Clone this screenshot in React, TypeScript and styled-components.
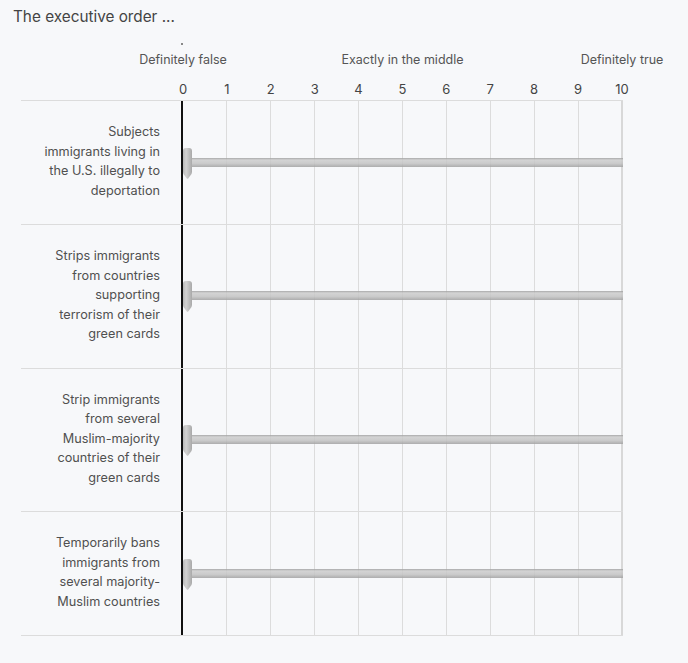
import React from "react";
import styled, { createGlobalStyle } from "styled-components";

const GlobalStyle = createGlobalStyle`
  html, body {
    margin: 0;
    padding: 0;
    background: #f7f8fa;
  }
  body {
    font-family: Inter, "Liberation Sans", Arial, sans-serif;
    color: #555;
  }
`;

const statements = [
  "Subjects immigrants living in the U.S. illegally to deportation",
  "Strips immigrants from countries supporting terrorism of their green cards",
  "Strip immigrants from several Muslim-majority countries of their green cards",
  "Temporarily bans immigrants from several majority-Muslim countries",
];

const anchors = ["Definitely false", "Exactly in the middle", "Definitely true"];
const ticks = Array.from({ length: 11 }, (_, i) => i);

const Page = styled.div`
  padding: 7px 0 28px 13px;
  width: 688px;
  box-sizing: border-box;
`;

const Title = styled.div`
  font-size: 15.3px;
  line-height: 20px;
  color: #444;
`;

const Chart = styled.div`
  margin-left: 8px;
  width: 602px;
`;

const DotRow = styled.div`
  margin-top: 16px;
  padding-left: 160px;
  height: 2px;
`;

const Dot = styled.div`
  width: 2px;
  height: 2px;
  background: #888;
`;

const ScaleRow = styled.div<{ $top: number }>`
  margin-top: ${(p) => p.$top}px;
  margin-left: 162px;
  width: 439px;
  display: flex;
  justify-content: space-between;
  line-height: 16px;
`;

const ScaleItem = styled.div<{ $size: number; $color: string }>`
  width: 0;
  display: flex;
  justify-content: center;
  white-space: nowrap;
  font-size: ${(p) => p.$size}px;
  color: ${(p) => p.$color};
`;

const Table = styled.div`
  margin-top: 3px;
  border-top: 1px solid #dcdcdc;
`;

const Row = styled.div`
  display: grid;
  grid-template-columns: 160px 442px;
  border-bottom: 1px solid #dcdcdc;
`;

const Label = styled.div`
  padding: 21px 21px 24px 0;
  display: flex;
  justify-content: flex-end;
  align-items: center;
`;

const LabelText = styled.div`
  max-width: 117px;
  text-align: right;
  font-size: 12.7px;
  line-height: 19.5px;
  color: #505050;
`;

const Track = styled.div`
  position: relative;
  display: grid;
  grid-template-columns: repeat(10, 44px);
  border-left: 2px solid #111;
`;

const Cell = styled.div<{ $last?: boolean }>`
  border-right: ${(p) => (p.$last ? "2px solid #d8d8d8" : "1px solid #dcdcdc")};
`;

const Bar = styled.div`
  position: absolute;
  left: 0;
  right: 0;
  top: 50%;
  height: 9px;
  margin-top: -5px;
  background: linear-gradient(
    to bottom,
    rgba(150, 150, 150, 0.8) 0%,
    rgba(205, 205, 205, 0.85) 22%,
    rgba(195, 195, 195, 0.85) 60%,
    rgba(160, 160, 160, 0.85) 100%
  );
`;

const Thumb = styled.svg`
  position: absolute;
  left: 0;
  top: 50%;
  margin-top: -15px;
`;

const SliderThumb: React.FC<{ id: number }> = ({ id }) => (
  <Thumb width="9" height="31" viewBox="0 0 9 31">
    <defs>
      <linearGradient id={`tg${id}`} x1="0" y1="0" x2="1" y2="0">
        <stop offset="0" stopColor="#b9b9b9" />
        <stop offset="0.35" stopColor="#d2d2d2" />
        <stop offset="1" stopColor="#a9a9a9" />
      </linearGradient>
    </defs>
    <path
      d="M0 3 Q0 0 3 0 H6 Q9 0 9 3 V24 Q9 26 7 28 L5.2 30.5 Q4.5 31 3.8 30.5 L2 28 Q0 26 0 24 Z"
      fill={`url(#tg${id})`}
    />
  </Thumb>
);

const App: React.FC = () => (
  <Page>
    <GlobalStyle />
    <Title>The executive order ...</Title>
    <Chart>
      <DotRow>
        <Dot />
      </DotRow>
      <ScaleRow $top={7}>
        {anchors.map((a) => (
          <ScaleItem key={a} $size={12.5} $color="#555">
            {a}
          </ScaleItem>
        ))}
      </ScaleRow>
      <ScaleRow $top={13}>
        {ticks.map((t) => (
          <ScaleItem key={t} $size={13} $color="#444">
            {t}
          </ScaleItem>
        ))}
      </ScaleRow>
      <Table>
        {statements.map((s, i) => (
          <Row key={s}>
            <Label>
              <LabelText>{s}</LabelText>
            </Label>
            <Track>
              {ticks.slice(1).map((t) => (
                <Cell key={t} $last={t === 10} />
              ))}
              <Bar />
              <SliderThumb id={i} />
            </Track>
          </Row>
        ))}
      </Table>
    </Chart>
  </Page>
);

export default App;
